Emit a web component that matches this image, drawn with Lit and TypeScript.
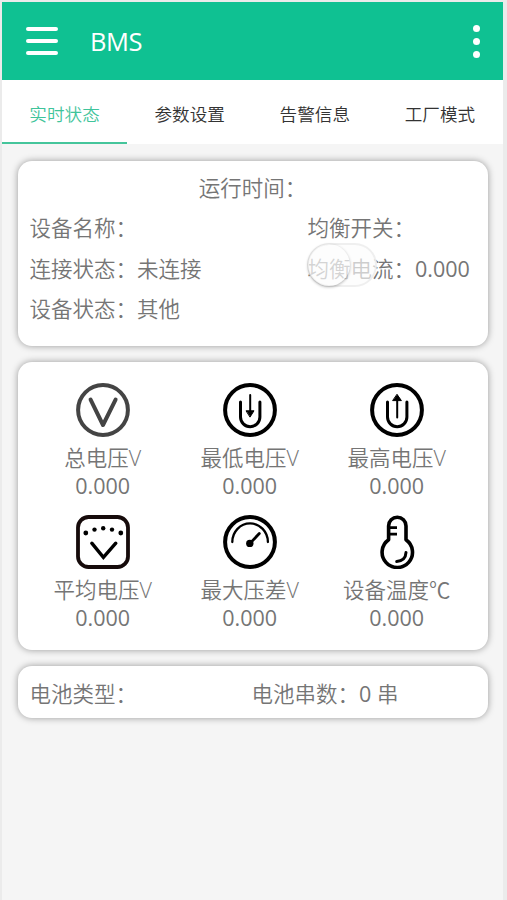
import { LitElement, html, css, svg } from "lit";
import { customElement, property, state } from "lit/decorators.js";
import { classMap } from "lit/directives/class-map.js";

const icons: Record<string, unknown> = {
  total: svg`<g stroke="#444"><circle cx="27" cy="27" r="24.9" stroke-width="4"/>
    <path d="M14.6 16.6 27 42 39.6 16.6" stroke-width="4"/></g>`,
  lowest: svg`<circle cx="27" cy="27" r="24.9" stroke-width="4"/>
    <path d="M17.5 19v15a9.7 9.7 0 0 0 19.4 0V19" stroke-width="3"/>
    <path d="M27.2 12v18" stroke-width="2"/>
    <path d="M23.4 27.8h7.6l-3.8 6z" fill="#000" stroke-width="1"/>`,
  highest: svg`<circle cx="27" cy="27" r="24.9" stroke-width="4"/>
    <path d="M17.5 19v15a9.7 9.7 0 0 0 19.4 0V19" stroke-width="3"/>
    <path d="M27.2 34.5V15" stroke-width="2"/>
    <path d="M23 17.6h8.4l-4.2-6z" fill="#000" stroke-width="1"/>`,
  average: svg`<rect x="2" y="2" width="50" height="50" rx="10.5" stroke="#160b0b" stroke-width="3.8"/>
    <g fill="#000" stroke="none"><circle cx="9.8" cy="18" r="2.4"/><circle cx="18.5" cy="14.6" r="2.2"/>
    <circle cx="27.2" cy="13.2" r="2.2"/><circle cx="36" cy="14.6" r="2.2"/><circle cx="44.8" cy="18" r="2.4"/></g>
    <path d="M15.8 28.2 27.4 42.4 39.8 28.2" stroke-width="3.4" stroke-linejoin="miter"/>`,
  difference: svg`<circle cx="27" cy="27" r="24.9" stroke-width="4"/>
    <path d="M9.3 27A17.8 18.6 0 0 1 44.9 27" stroke-width="2.3"/>
    <circle cx="26.8" cy="28.4" r="3.7" fill="#000" stroke="none"/>
    <path d="M27 28.4 36.3 18.5" stroke-width="2.8"/>`,
  temperature: svg`<path d="M18.6 24.8V11a8.7 8.7 0 0 1 17.4 0v13.8A15.2 15.2 0 1 1 18.6 24.8Z" stroke-width="3.6"/>
    <path d="M19 12.7h8M19 19.2h8" stroke-width="2.8" stroke-linecap="butt"/>
    <path d="M36 37.5q-.4 8.2-9.3 9" stroke-width="3"/>`,
};

@customElement("metric-tile")
class MetricTile extends LitElement {
  @property() icon = "";
  @property() label = "";
  @property() value = "";

  static styles = css`
    :host { display: flex; flex-direction: column; align-items: center; height: 132px; white-space: nowrap; }
    svg { width: 54px; height: 54px; display: block; margin-bottom: 7px; fill: none; stroke: #000; stroke-linecap: round; stroke-linejoin: round; }
    .label { line-height: 28px; }
    .value { line-height: 28px; font-weight: 400; }
  `;

  render() {
    return html`<svg viewBox="0 0 54 54">${icons[this.icon]}</svg>
      <span class="label">${this.label}</span>
      <span class="value">${this.value}</span>`;
  }
}

@customElement("app-root")
class AppRoot extends LitElement {
  @state() active = 0;

  tabs = ["实时状态", "参数设置", "告警信息", "工厂模式"];
  metrics = [
    ["total", "总电压V"],
    ["lowest", "最低电压V"],
    ["highest", "最高电压V"],
    ["average", "平均电压V"],
    ["difference", "最大压差V"],
    ["temperature", "设备温度℃"],
  ];

  static styles = css`
    :host {
      display: block; box-sizing: border-box; height: 900px; padding: 2px 4.5px 0 2px;
      background: #ebebeb; color: #757575;
      font: 350 21.5px "Open Sans", "Noto Sans CJK SC", sans-serif;
    }
    .page { height: 898px; background: #f5f5f5; }
    header { height: 78px; box-sizing: border-box; display: flex; align-items: center; padding: 0 22.5px 0 24px; background: #0fc192; color: #fff; }
    .menu { display: flex; flex-direction: column; gap: 8px; width: 32px; }
    .menu i { height: 4px; border-radius: 2px; background: #fff; }
    h1 { margin: 0 0 0 32px; flex: 1; font-size: 25.5px; font-weight: 400; line-height: 32px; letter-spacing: -.5px; }
    .more { display: flex; flex-direction: column; gap: 6px; }
    .more i { width: 7px; height: 7px; border-radius: 50%; background: #fff; }
    nav { display: flex; height: 64px; background: #fff; }
    .tab { flex: 1; box-sizing: border-box; height: 64px; line-height: 68px; text-align: center; font-size: 17.6px; color: #333; border-bottom: 2px solid transparent; }
    .tab.active { color: #3fc49b; border-color: #45c59b; }
    main { display: flex; flex-direction: column; gap: 16px; padding: 17px 15px 0 16px; }
    .card { box-sizing: border-box; background: #fff; border-radius: 14px; box-shadow: 0 0 7px rgba(0, 0, 0, .38); white-space: nowrap; }
    .status { height: 185px; padding: 7px 12px 0 11.5px; }
    .runtime { text-align: center; line-height: 40px; }
    .info { display: grid; grid-template-columns: 278px 1fr; line-height: 40.5px; }
    .num { font-weight: 400; }
    .balance { position: relative; }
    .switch { position: absolute; left: -1px; top: -6px; box-sizing: border-box; width: 70px; height: 44px; border-radius: 22px; border: 2px solid rgba(235, 235, 235, .8); background: rgba(252, 252, 252, .65); }
    .knob { position: absolute; left: -1px; top: -1px; width: 42px; height: 42px; border-radius: 50%; background: rgba(255, 255, 255, .15); box-shadow: 0 1px 3px rgba(0, 0, 0, .3); }
    .metrics { height: 288px; padding: 21px 18px 0 12px; display: grid; grid-template-columns: repeat(3, 147px); justify-content: center; align-content: start; }
    .battery { height: 52px; padding: 0 11.5px; display: grid; grid-template-columns: 222px 1fr; line-height: 55px; }
  `;

  render() {
    return html`<div class="page">
      <header>
        <div class="menu"><i></i><i></i><i></i></div>
        <h1>BMS</h1>
        <div class="more"><i></i><i></i><i></i></div>
      </header>
      <nav>
        ${this.tabs.map((t, i) => html`<div class=${classMap({ tab: true, active: i === this.active })} @click=${() => (this.active = i)}>${t}</div>`)}
      </nav>
      <main>
        <section class="card status">
          <div class="runtime">运行时间：</div>
          <div class="info">
            <span>设备名称：</span><span>均衡开关：</span>
            <span>连接状态：未连接</span>
            <span class="balance">均衡电流：<span class="num">0.000</span><span class="switch"><span class="knob"></span></span></span>
            <span>设备状态：其他</span>
          </div>
        </section>
        <section class="card metrics">
          ${this.metrics.map(([icon, label]) => html`<metric-tile icon=${icon} label=${label} value="0.000"></metric-tile>`)}
        </section>
        <section class="card battery"><span>电池类型：</span><span>电池串数：<span class="num">0</span> 串</span></section>
      </main>
    </div>`;
  }
}
